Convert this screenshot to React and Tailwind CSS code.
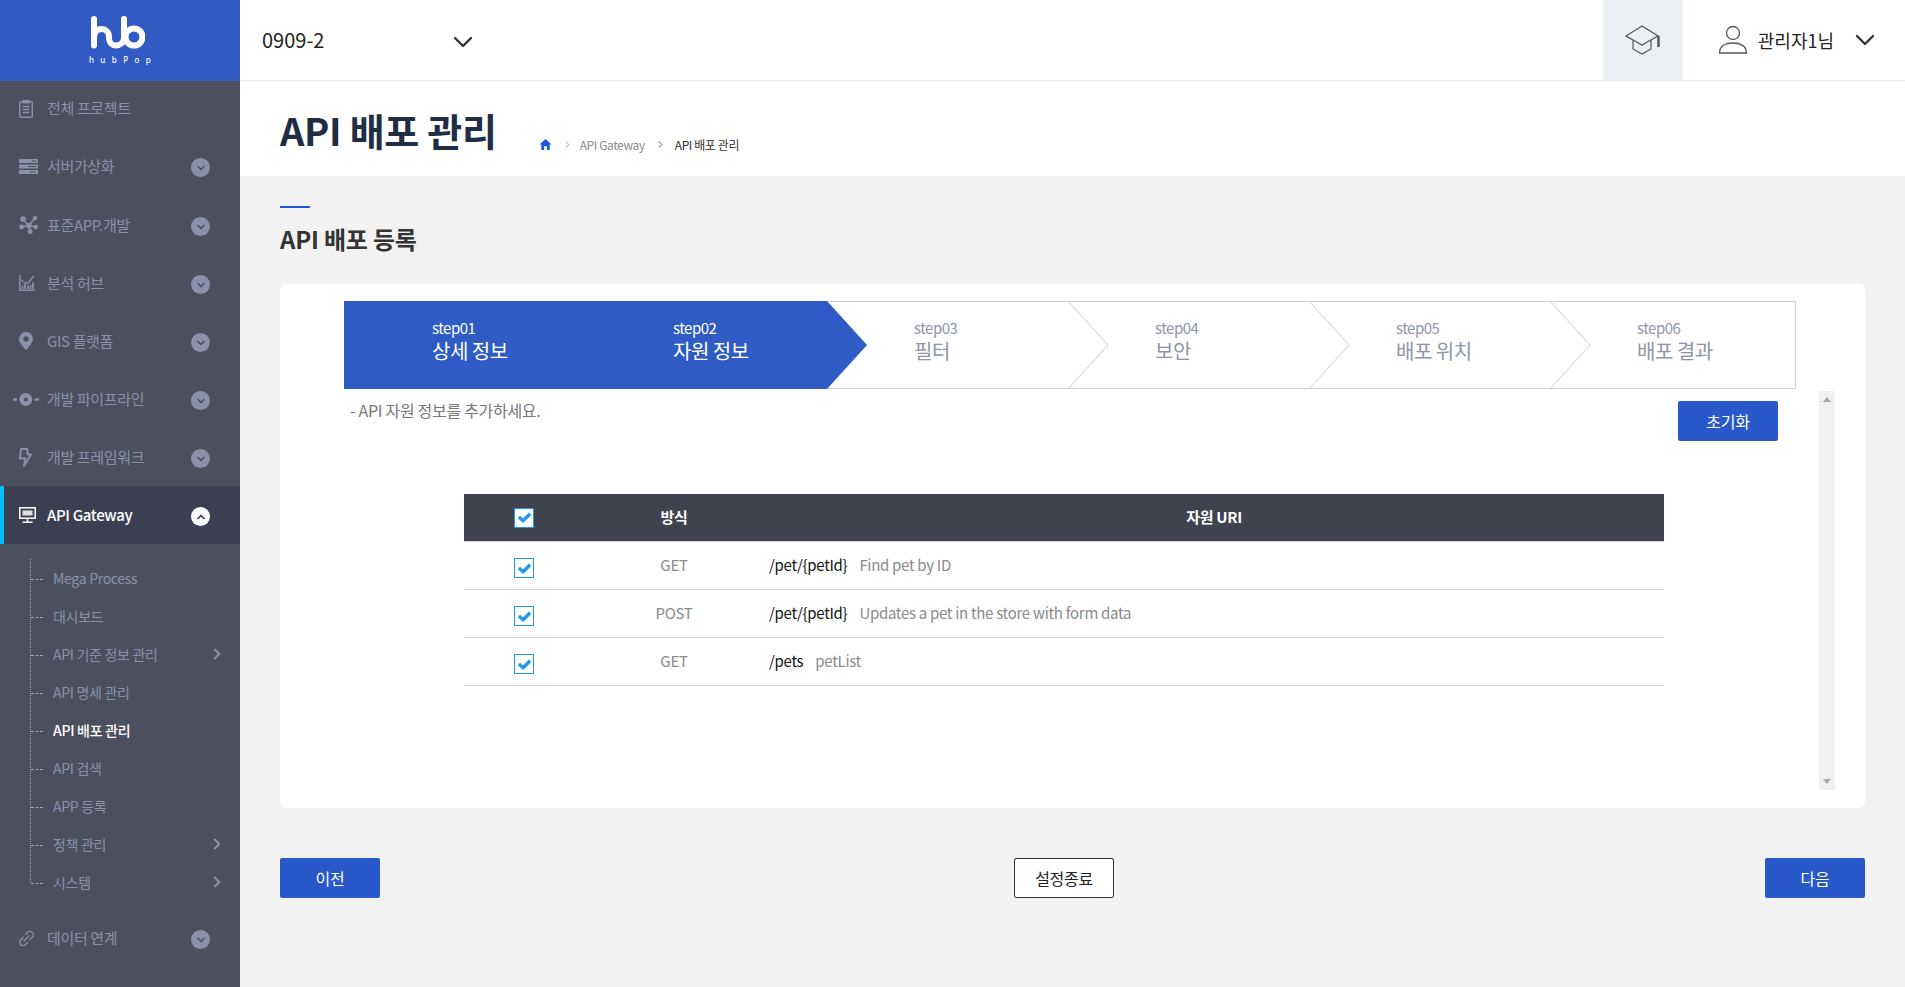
import React from "react";
import { ChevronDown, ChevronUp, ChevronRight } from "lucide-react";

const FONT = "font-['Noto_Sans_CJK_KR','Noto_Sans',sans-serif]";

const icons = {
  clip: (
    <svg viewBox="0 0 14 18" className="w-[14px] h-[18px]" fill="none" stroke="currentColor" strokeWidth="1.4"><rect x="0.7" y="1.7" width="12.6" height="15.6" rx="1.2" /><path d="M4 0.7h6v2H4zM3.5 6.5h7M3.5 9.5h7M3.5 12.5h7" /></svg>
  ),
  server: (
    <svg viewBox="0 0 19 15" className="w-[19px] h-[15px]" fill="currentColor"><path fillRule="evenodd" d="M0 0h19v4H0zM13 1.6v.9h4v-.9zM0 5.5h19v4H0zM9 7.1v.9h8v-.9zM0 11h19v4H0zM11 12.6v.9h6v-.9z" /></svg>
  ),
  nodes: (
    <svg viewBox="0 0 19 18" className="w-[19px] h-[18px]" fill="currentColor" stroke="currentColor" strokeWidth="1.6"><path d="M4 3.5l6 6M16 2l-6 7.5M2 11l8-1.5M11 15.5l-1-6M10 9.5l7 1.5" fill="none" /><circle cx="4" cy="3" r="2.8" stroke="none" /><circle cx="16" cy="2.2" r="2.2" stroke="none" /><circle cx="2.5" cy="11" r="2.4" stroke="none" /><circle cx="10" cy="9.5" r="2.6" stroke="none" /><circle cx="11.2" cy="15.4" r="2.500" stroke="none" /><circle cx="16.800" cy="11" r="2.200" stroke="none" /></svg>
  ),
  chart: (
    <svg viewBox="0 0 16 16" className="w-[16px] h-[16px]" fill="none" stroke="currentColor" strokeWidth="1.5"><path d="M0.8 0v15.2H16" /><path d="M3.5 14v-3.500M6 14v-5.500M9 14v-3.500M11.500 14v-3.500M14 14v-6.500" strokeWidth="1.800" /><path d="M1.500 4.500L5 7l4 1.500L14.500 1" strokeWidth="1.300" /></svg>
  ),
  pin: (
    <svg viewBox="0 0 14 18" className="w-[14px] h-[18px]" fill="currentColor"><path fillRule="evenodd" d="M7 0a7 7 0 0 0-7 7c0 4.500 7 11 7 11s7-6.500 7-11a7 7 0 0 0-7-7zm0 4.300a2.700 2.700 0 1 1 0 5.400 2.700 2.700 0 0 1 0-5.400z" /></svg>
  ),
  pipe: (
    <svg viewBox="0 0 26 13" className="w-[26px] h-[13px] -ml-[6px] max-w-none" fill="currentColor"><rect x="0" y="5.300" width="4" height="2.400" rx="0.6" /><rect x="21.500" y="5.300" width="4.500" height="2.400" rx="0.6" /><path fillRule="evenodd" d="M12.800 0a6.500 6.500 0 1 0 0 13 6.500 6.500 0 0 0 0-13zm0 4.500a2 2 0 1 1 0 4 2 2 0 0 1 0-4z" /></svg>
  ),
  bolt: (
    <svg viewBox="0 0 13 19" className="w-[13px] h-[19px]" fill="none" stroke="currentColor" strokeWidth="1.900" strokeLinejoin="round"><path d="M2 1h6.500v5.500H12L5 18l1.500-7.500H1z" /></svg>
  ),
  monitor: (
    <svg viewBox="0 0 17 16" className="w-[17px] h-[16px]" fill="none" stroke="currentColor" strokeWidth="1.500"><rect x="0.800" y="0.800" width="15.400" height="10.400" /><path d="M3.500 3.500h10v5h-10z" fill="currentColor" fillOpacity="0.85" stroke="none" /><path d="M8.500 11v4M3.500 15.200h10" /></svg>
  ),
  link: (
    <svg viewBox="0 0 16 16" className="w-[15px] h-[15px]" fill="none" stroke="currentColor" strokeWidth="1.500" strokeLinecap="round"><path d="M5.500 10.500l5-5.300M7 3.500l2-2a3.600 3.600 0 0 1 5.200 5l-2.700 2.900M9 12.500l-2 2a3.600 3.600 0 0 1-5.200-5l2.700-2.900" /></svg>
  ),
};

const MainItem = ({ icon, label, active, h = "h-[58px]" }) => (
  <div className={`${h} flex items-center relative ${active ? "bg-[#3c3f51] text-white font-medium" : "text-[#8a92ab]"}`}>
    {active && <span className="absolute left-0 top-0 bottom-0 w-1 bg-[#00bfff]" />}
    <span className="w-[28px] ml-[19px] shrink-0 flex items-center">{icons[icon]}</span>
    <span className="flex-1 text-[15px] tracking-[-0.35px] whitespace-nowrap">{label}</span>
    {label !== "전체 프로젝트" && (
      <span className={`w-[19px] h-[19px] mt-[3px] mr-[30px] rounded-full flex items-center justify-center ${active ? "bg-white text-[#3c3f51]" : "bg-[#8a92ab] text-[#4c505e]"}`}>
        {active ? <ChevronUp size={12} strokeWidth={3.5} /> : <ChevronDown size={12} strokeWidth={3.5} />}
      </span>
    )}
  </div>
);

const SubItem = ({ label, arrow, active }) => (
  <li className={`h-[38px] flex items-center text-[14px] tracking-[-0.3px] ${active ? "text-white font-medium" : "text-[#8a92ab]"}`}>
    <span className="w-3 ml-[1px] border-t border-dashed border-[#a3a8b8] mt-[2px]" />
    <span className="ml-[10px] flex-1 whitespace-nowrap">{label}</span>
    {arrow && <ChevronRight size={18} strokeWidth={2.8} className="mr-[14px]" />}
  </li>
);

const Sidebar = () => (
  <aside className="w-[240px] shrink-0 bg-[#4c505e] flex flex-col">
    <div className="h-[81px] bg-[#315bc3] flex flex-col items-center pt-[16px] text-white">
      <svg viewBox="0 0 54 33" className="w-[54px] h-[33px] mr-[4px]" fill="none" stroke="currentColor" strokeWidth="6" strokeLinecap="round">
        <path d="M3 3v26.500M3 22c0-6 3.500-9 7.500-9s7.500 3 7.500 8v1c0 4.500 3 7.500 7 7.500s8-3 8-8V3" />
        <circle cx="43" cy="21" r="8.500" />
      </svg>
      <span className="mt-[5px] text-[8px] leading-[12px] tracking-[6.4px] pl-[6px] font-['Noto_Sans',sans-serif] font-medium">hubPop</span>
    </div>
    <MainItem icon="clip" label="전체 프로젝트" h="h-[55px]" />
    <MainItem icon="server" label="서버가상화" h="h-[60px]" />
    <MainItem icon="nodes" label="표준APP.개발" />
    <MainItem icon="chart" label="분석 허브" />
    <MainItem icon="pin" label="GIS 플랫폼" />
    <MainItem icon="pipe" label="개발 파이프라인" />
    <MainItem icon="bolt" label="개발 프레임워크" />
    <MainItem icon="monitor" label="API Gateway" active />
    <ul className="relative ml-[30px] mt-[15px]">
      <span className="absolute left-0 top-0 bottom-[19px] border-l border-dotted border-[#a3a8b8]" />
      <SubItem label="Mega Process" />
      <SubItem label="대시보드" />
      <SubItem label="API 기준 정보 관리" arrow />
      <SubItem label="API 명세 관리" />
      <SubItem label="API 배포 관리" active />
      <SubItem label="API 검색" />
      <SubItem label="APP 등록" />
      <SubItem label="정책 관리" arrow />
      <SubItem label="시스템" arrow />
    </ul>
    <div className="mt-[8px]"><MainItem icon="link" label="데이터 연계" /></div>
  </aside>
);

const Header = () => (
  <header className="h-[81px] shrink-0 bg-white border-b border-[#eeeeee] flex items-center">
    <span className="ml-[22px] w-[185px] text-[20px] text-[#222]">0909-2</span>
    <ChevronDown size={32} strokeWidth={1.8} className="text-[#333] mt-[3px]" />
    <div className="flex-1" />
    <div className="w-[80px] h-full bg-[#eceff4] flex items-center justify-center text-[#555]">
      <svg viewBox="0 0 36 30" className="w-[36px] h-[30px]" fill="none" stroke="currentColor" strokeWidth="1.2">
        <path d="M17 1L1 11l16 9 16-9zM8 15v9l9 5 9-5v-9" />
        <path d="M33.500 11v11" strokeWidth="2.400" />
      </svg>
    </div>
    <svg viewBox="0 0 30 30" className="w-[30px] h-[30px] ml-[35px] text-[#555]" fill="none" stroke="currentColor" strokeWidth="1.3">
      <circle cx="15" cy="8" r="6.500" />
      <path d="M1.500 28c0-7 6-10 13.500-10s13.500 3 13.500 10z" />
    </svg>
    <span className="ml-[10px] text-[18px] text-[#222]">관리자1님</span>
    <ChevronDown size={32} strokeWidth={1.8} className="ml-[15px] mr-[24px] text-[#333]" />
  </header>
);

const steps = [
  ["step01", "상세 정보"], ["step02", "자원 정보"], ["step03", "필터"],
  ["step04", "보안"], ["step05", "배포 위치"], ["step06", "배포 결과"],
];

const Steps = () => (
  <div className="ml-[64px] mr-[69px] h-[88px] flex border-y border-r border-[#cdcfdc]">
    {steps.map(([s, t], i) => {
      const on = i < 2;
      return (
        <div key={s} className={`relative -my-px h-[88px] pl-[88px] pt-[17px] ${i === 5 ? "flex-1" : "w-[241px]"} ${on ? "bg-[#2f5bc4] text-white" : "text-[#8f94a8]"}`}>
          <div className="text-[15px] leading-[20px] tracking-[-0.5px]">{s}</div>
          <div className="text-[20px] leading-[26px] tracking-[-0.5px]">{t}</div>
          {i === 1 && (
            <svg viewBox="0 0 41 88" className="absolute top-0 left-full w-[41px] h-[88px] z-10"><path d="M0 0h1l40 44L1 88H0z" fill="#2f5bc4" /></svg>
          )}
          {i > 1 && i < 5 && (
            <svg viewBox="0 0 40 88" className="absolute top-0 left-[calc(100%+1px)] w-[40px] h-[88px] z-10" fill="none"><path d="M0 0l40 44L0 88" stroke="#cdcfdc" strokeWidth="1" /></svg>
          )}
        </div>
      );
    })}
  </div>
);

const Check = ({ cls = "" }) => (
  <span className={`w-5 h-5 bg-white border border-[#2196f3] flex items-center justify-center ${cls}`}>
    <svg viewBox="0 0 16 16" className="w-[15px] h-[15px]" fill="none" stroke="#2196f3" strokeWidth="3.500"><path d="M2 7.500l4.500 4L14 4" /></svg>
  </span>
);

const rows = [
  ["GET", "/pet/{petId}", "Find pet by ID"],
  ["POST", "/pet/{petId}", "Updates a pet in the store with form data"],
  ["GET", "/pets", "petList"],
];

const Table = () => (
  <div className="ml-[184px] w-[1200px] mt-[53px] text-[15px] tracking-[-0.3px]">
    <div className="h-[48px] bg-[#40434f] border-b border-[#d6d6d6] flex items-center text-white font-bold">
      <div className="w-[120px] flex justify-center"><Check /></div>
      <div className="w-[180px] text-center">방식</div>
      <div className="flex-1 text-center">자원 URI</div>
    </div>
    {rows.map(([m, u, d], i) => (
      <div key={i} className="h-[48px] border-b border-[#d6d6d6] flex items-center">
        <div className="w-[120px] flex justify-center"><Check cls="mt-[5px]" /></div>
        <div className="w-[180px] text-center text-[#8a8a8a]">{m}</div>
        <div className="flex-1 pl-[5px] flex">
          <span className="text-[#111]">{u}</span>
          <span className="ml-3 text-[#8a8a8a]">{d}</span>
        </div>
      </div>
    ))}
  </div>
);

const Btn = ({ children, outline }) => (
  <button className={`w-[100px] h-[40px] rounded-[2px] text-[16px] tracking-[-0.3px] ${outline ? "bg-white border border-[#333] text-[#222]" : "bg-[#2958ca] text-white"}`}>{children}</button>
);

export default function App() {
  return (
    <div className={`h-screen w-full overflow-hidden flex ${FONT}`}>
      <Sidebar />
      <main className="flex-1 min-w-0 flex flex-col bg-[#f2f2f2]">
        <Header />
        <div className="h-[95px] shrink-0 bg-white pl-10 flex items-center">
          <h1 className="text-[38px] font-bold text-[#1f2d45] tracking-[-0.3px] leading-none mt-[2px]">API 배포 관리</h1>
          <div className="ml-[42px] mt-[32px] flex items-center text-[12px] tracking-[-0.4px]">
            <svg viewBox="0 0 14 14" className="w-[13px] h-[13px]" fill="#1c57d9"><path d="M7 1L0.500 7H2.500V13H5.500V9H8.500V13H11.500V7H13.500z" /></svg>
            <ChevronRight size={11} strokeWidth={1.5} className="ml-[10px] mr-[7px] text-[#777]" />
            <span className="text-[#8a8a8a]">API Gateway</span>
            <ChevronRight size={11} strokeWidth={1.5} className="ml-[10px] mr-[9px] text-[#222]" />
            <span className="text-[#333]">API 배포 관리</span>
          </div>
        </div>
        <div className="flex-1 px-10">
          <div className="mt-[30px] w-[30px] h-[2px] bg-[#1c57d9]" />
          <h2 className="mt-[15px] text-[24px] leading-[32px] font-bold text-[#333] tracking-[-0.2px]">API 배포 등록</h2>
          <section className="mt-[29px] h-[524px] bg-white rounded-[6px] pt-[17px]">
            <Steps />
            <div className="mt-[2px] h-[399px] flex mr-[30px]">
              <div className="flex-1 min-w-0">
                <div className="flex justify-between pl-[70px] pr-[41px] pt-[10px]">
                  <p className="text-[16px] tracking-[-0.3px] text-[#777] leading-[20px] -mt-[1px]">- API 자원 정보를 추가하세요.</p>
                  <Btn>초기화</Btn>
                </div>
                <Table />
              </div>
              <div className="w-4 bg-[#f1f1f1] flex flex-col justify-between items-center py-[6px]">
                <span className="w-0 h-0 border-x-[4px] border-x-transparent border-b-[5px] border-b-[#a8a8a8]" />
                <span className="w-0 h-0 border-x-[4px] border-x-transparent border-t-[5px] border-t-[#a8a8a8]" />
              </div>
            </div>
          </section>
          <div className="mt-[50px] flex">
            <Btn>이전</Btn>
            <div className="ml-[634px]"><Btn outline>설정종료</Btn></div>
            <div className="flex-1" />
            <Btn>다음</Btn>
          </div>
        </div>
      </main>
    </div>
  );
}
